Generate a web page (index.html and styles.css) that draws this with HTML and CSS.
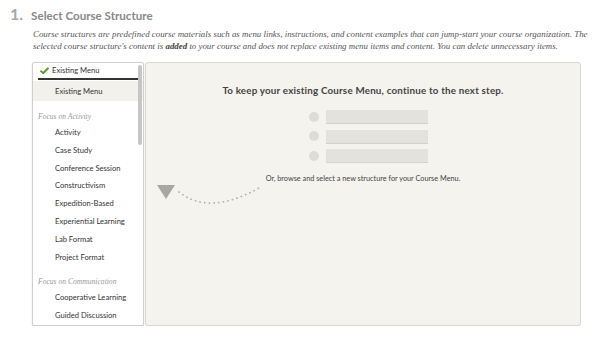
FILE: index.html
```html
<!DOCTYPE html>
<html lang="en">
<head>
    <meta charset="UTF-8">
    <title>Select Course Structure</title>
    <link rel="stylesheet" href="styles.css">
</head>
<body>

<!-- Step Heading -->
<div class="step">
    <h1><span class="step-num">1.</span> Select Course Structure</h1>
    <p class="intro">Course structures are predefined course materials such as menu links, instructions, and content examples that can jump-start your course organization. The<br>selected course structure's content is <b>added</b> to your course and does not replace existing menu items and content. You can delete unnecessary items.</p>
</div>

<!-- Structure Picker -->
<div class="builder">
    <div class="menu-list">
        <div class="menu-head">
            <svg class="check" width="9" height="7" viewBox="0 0 9 7"><path d="M0.5 3.6 L3.2 6.2 L8.5 0.8" fill="none" stroke="#5b9e2d" stroke-width="2"/></svg>
            Existing Menu
        </div>
        <div class="menu-item selected">Existing Menu</div>

        <div class="menu-group">Focus on Activity</div>
        <div class="menu-item">Activity</div>
        <div class="menu-item">Case Study</div>
        <div class="menu-item">Conference Session</div>
        <div class="menu-item">Constructivism</div>
        <div class="menu-item">Expedition-Based</div>
        <div class="menu-item">Experiential Learning</div>
        <div class="menu-item">Lab Format</div>
        <div class="menu-item">Project Format</div>

        <div class="menu-group">Focus on Communication</div>
        <div class="menu-item">Cooperative Learning</div>
        <div class="menu-item">Guided Discussion</div>

        <div class="scroll-thumb"></div>
    </div>

    <div class="preview">
        <h2>To keep your existing Course Menu, continue to the next step.</h2>
        <div class="sample">
            <div class="sample-row"><span class="dot"></span><span class="bar"></span></div>
            <div class="sample-row"><span class="dot"></span><span class="bar"></span></div>
            <div class="sample-row"><span class="dot"></span><span class="bar"></span></div>
        </div>
        <p class="hint">Or, browse and select a new structure for your Course Menu.</p>
        <svg class="arrow" width="106" height="26" viewBox="0 0 106 26">
            <polygon points="0,1 18,1 9,15" fill="#a8a8a0"/>
            <path d="M22 8 Q52 32 102 4" fill="none" stroke="#b5b4ac" stroke-width="1.8" stroke-dasharray="0.1 4.6" stroke-linecap="round"/>
        </svg>
    </div>
</div>

</body>
</html>
```

FILE: styles.css
```css
/* Global Styles */
body {
    margin: 0;
    padding: 0;
    background-color: #fff;
    font-family: 'Lato', 'DejaVu Sans', sans-serif;
    color: #333;
}

/* Step Heading */
.step {
    padding: 4px 10px 0 10px;
}

.step h1 {
    margin: 0;
    font-size: 11.6px;
    font-weight: 700;
    color: #888;
    display: flex;
    align-items: baseline;
    gap: 8px;
}

.step-num {
    font-size: 16px;
    color: #a8a8a8;
}

.intro {
    margin: 5px 0 0 23px;
    font-family: 'Liberation Serif', serif;
    font-style: italic;
    font-size: 8.9px;
    line-height: 12px;
    white-space: nowrap;
    color: #555;
}

.intro b {
    font-weight: 700;
    color: #444;
}

/* Structure Picker */
.builder {
    display: flex;
    gap: 1px;
    margin: 10px 0 0 32px;
    width: 549px;
    height: 264px;
}

.menu-list {
    position: relative;
    width: 110px;
    flex-shrink: 0;
    background: #fff;
    border: 1px solid #cfcfcf;
    border-radius: 2px;
    box-shadow: 0 1px 2px rgba(0, 0, 0, 0.12);
    overflow: hidden;
    font-size: 7.6px;
    color: #333;
}

.scroll-thumb {
    position: absolute;
    top: 2px;
    right: 1px;
    width: 4px;
    height: 80px;
    border-radius: 2px;
    background: #c6c6c6;
}

.menu-head {
    display: flex;
    align-items: center;
    gap: 3px;
    margin: 0 5px 0 5px;
    padding: 2px 0 2px 2px;
    line-height: 11px;
    border-bottom: 2px solid #333;
}

.menu-item {
    padding-left: 22px;
    line-height: 17.8px;
}

.menu-item.selected {
    background: #f2f1eb;
    line-height: 20px;
    margin-top: 1px;
}

.menu-group {
    padding: 8px 0 0 5px;
    line-height: 14px;
    font-family: 'Liberation Serif', serif;
    font-style: italic;
    font-size: 7.6px;
    color: #9a9a9a;
}

.menu-item + .menu-group {
    padding-top: 9px;
}

/* Preview Panel */
.preview {
    flex: 1;
    display: flex;
    flex-direction: column;
    align-items: center;
    background: #f4f3ee;
    border: 1px solid #d9d8d2;
    border-radius: 3px;
    box-shadow: 0 1px 1px rgba(0, 0, 0, 0.06);
}

.preview h2 {
    margin: 21px 0 0 0;
    font-size: 9.8px;
    font-weight: 700;
    color: #444;
    letter-spacing: 0.2px;
}

.sample {
    margin: 14px 0 0 10px;
    display: flex;
    flex-direction: column;
    gap: 6.5px;
}

.sample-row {
    display: flex;
    align-items: center;
    gap: 7px;
}

.dot {
    width: 10px;
    height: 10px;
    border-radius: 50%;
    background: #dddcd5;
}

.bar {
    width: 102px;
    height: 13px;
    background: #e3e2dc;
    box-shadow: 0 1px 0 #d2d1ca;
}

.hint {
    margin: 12px 0 0 0;
    font-size: 7.3px;
    color: #444;
}

.arrow {
    align-self: flex-start;
    margin: 1px 0 0 11px;
}
```
